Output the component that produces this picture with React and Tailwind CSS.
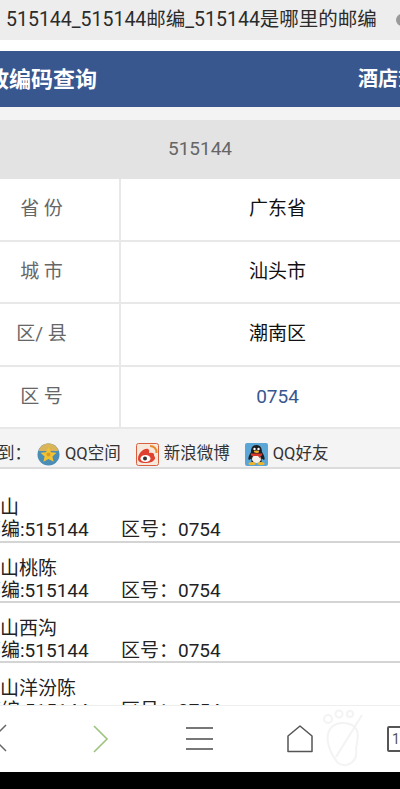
const font = { fontFamily: '"Roboto", "Noto Sans CJK SC", sans-serif' };

const rows = [
  { label: "省 份", value: "广东省" },
  { label: "城 市", value: "汕头市" },
  { label: "区/ 县", value: "潮南区" },
  { label: "区 号", value: "0754", link: true },
];

const places = ["山", "山桃陈", "山西沟", "山洋汾陈"];

/* ─── Share icons ─── */
function QzoneIcon() {
  return (
    <svg width="23" height="23" viewBox="0 0 23 23" className="shrink-0">
      <circle cx="11.5" cy="11.5" r="11" fill="#4b8db5" />
      <path d="M11.5 .5 C16 .5 20 3 21.5 8 L1.5 8 C3 3 7 .5 11.5 .5Z" fill="#d9b45a" />
      <path d="M11.5 4 L14 9.2 L19.5 9.8 L15.4 13.4 L16.6 18.8 L11.5 16 L6.4 18.8 L7.6 13.4 L3.5 9.8 L9 9.2Z" fill="#f3c230" />
      <circle cx="11.5" cy="11.5" r="2" fill="#d99a2a" />
    </svg>
  );
}

function WeiboIcon() {
  return (
    <svg width="23" height="23" viewBox="0 0 23 23" className="shrink-0">
      <rect x="0.5" y="0.5" width="22" height="22" rx="2" fill="#f6e9dc" stroke="#d9603f" />
      <path d="M2 16 C2 10 8 5 12 6 C14 7 13 9 13 10 C16 9 19 10 18 13 C20 14 20 19 11 20 C6 20.5 2 19 2 16Z" fill="#e0402f" />
      <ellipse cx="9.5" cy="15.5" rx="5" ry="3.6" fill="#fff" />
      <circle cx="9" cy="15.5" r="2" fill="#333" />
      <path d="M14 3 C18 3 21 6 20.5 10" fill="none" stroke="#e8892f" strokeWidth="2" />
    </svg>
  );
}

function QqIcon() {
  return (
    <svg width="23" height="23" viewBox="0 0 23 23" className="shrink-0">
      <rect width="23" height="23" rx="2" fill="#5aa6d6" />
      <path d="M11.5 2 C16 2 17 6 17 9 C19 12 20.5 16 19 17 L16.5 15.5 L16.5 19 L6.5 19 L6.5 15.5 L4 17 C2.500 16 4 12 6 9 C6 6 7 2 11.5 2Z" fill="#1d1d1f" />
      <ellipse cx="11.5" cy="16" rx="4.5" ry="4" fill="#f4f1ea" />
      <path d="M5.500 10.500 L17.500 10.500 L16.500 13 L15 13 L15.500 16 L13 13 L6.500 13Z" fill="#d8382b" />
      <circle cx="9.500" cy="6" r="1.200" fill="#fff" />
      <circle cx="13.500" cy="6" r="1.200" fill="#fff" />
      <ellipse cx="11.5" cy="8.700" rx="2.600" ry="1.200" fill="#f0b429" />
      <ellipse cx="7" cy="20.500" rx="3.500" ry="1.600" fill="#f0b429" />
      <ellipse cx="16" cy="20.500" rx="3.500" ry="1.600" fill="#f0b429" />
    </svg>
  );
}

function ShareItem({ icon, label, className }) {
  return (
    <div className={`flex shrink-0 items-center gap-[5px] ${className}`}>
      {icon}
      <span className="text-[16.5px] text-[#333]">{label}</span>
    </div>
  );
}

function App() {
  return (
    <div style={font} className="relative flex h-[789px] w-[400px] flex-col overflow-hidden bg-white">
      {/* Browser title */}
      <div className="flex h-10 shrink-0 items-center gap-[19px] overflow-hidden whitespace-nowrap bg-[#ededed] pl-[6px] text-[19.5px] text-[#2b2b2b]">
        <span>515144_515144邮编_515144是哪里的邮编</span>
        <span className="h-[12px] w-[12px] shrink-0 rounded-full bg-[#999]" />
      </div>

      {/* Site header */}
      <div className="mt-[11px] flex h-14 shrink-0 items-center overflow-hidden whitespace-nowrap bg-[#38578f] text-white">
        <span className="-ml-[35px] shrink-0 text-[22px] font-bold">邮政编码查询</span>
        <span className="ml-[261px] shrink-0 text-[20px] font-bold">酒店查询</span>
      </div>
      <div className="h-[13px] shrink-0 bg-[#f3f3f3]" />

      {/* Result table */}
      <div className="flex h-[59px] shrink-0 items-center justify-center bg-[#e3e3e3] text-[19px] text-[#666]">515144</div>
      {rows.map((row) => (
        <div key={row.label} className="flex h-[62.5px] shrink-0 items-center border-b-2 border-[#e8e8e8]">
          <div className="flex h-full w-[121px] shrink-0 items-center justify-center whitespace-nowrap border-r-2 border-[#e8e8e8] pr-[36px] text-[19px] text-[#666]">
            {row.label}
          </div>
          <div className={row.link ? "ml-[34px] flex-1 text-center text-[19px] text-[#38578f]" : "ml-[34px] flex-1 text-center text-[19px] text-[#111]"}>
            {row.value}
          </div>
        </div>
      ))}

      {/* Share bar */}
      <div className="flex h-[40px] shrink-0 items-center overflow-hidden whitespace-nowrap border-b-2 border-[#dcdcdc] bg-[#f4f4f4] pt-[13px] text-[16.5px] text-[#333]">
        <span className="-ml-[35px] w-[72px] shrink-0">分享到：</span>
        <ShareItem icon={<QzoneIcon />} label="QQ空间" />
        <ShareItem icon={<WeiboIcon />} label="新浪微博" className="ml-[15px]" />
        <ShareItem icon={<QqIcon />} label="QQ好友" className="ml-[15px]" />
      </div>

      {/* Post office list */}
      <div className="flex-1 overflow-hidden">
        {places.map((place, i) => (
          <div key={place} className={i === 0 ? "h-[74px] overflow-hidden whitespace-nowrap border-b-2 border-[#d4d4d4] pt-[28px] text-[19px] leading-[22px] text-[#222]" : "h-[60px] overflow-hidden whitespace-nowrap border-b-2 border-[#d4d4d4] pt-[15px] text-[19px] leading-[22px] text-[#222]"}>
            <div>{place}</div>
            <div className="-ml-[18px] flex">
              <span className="w-[139px]">邮编:515144</span>
              <span>区号：0754</span>
            </div>
          </div>
        ))}
      </div>

      {/* Browser toolbar */}
      <div className="relative flex h-[67px] shrink-0 items-center border-t border-[#eee] bg-white text-[#666]">
        <svg width="8" height="28" viewBox="0 0 8 28" className="absolute left-0 top-[18px]" fill="none" stroke="#666" strokeWidth="1.5">
          <path d="M6 1 L-7 14 L6 27" />
        </svg>
        <svg width="16" height="28" viewBox="0 0 16 28" className="absolute left-[93px] top-[19px]" fill="none" stroke="#9cc47c" strokeWidth="1.6">
          <path d="M1 1 L14 14 L1 27" />
        </svg>
        <div className="absolute left-[186px] top-[21px] flex h-[23px] w-[27px] flex-col justify-between">
          <div className="h-[2px] bg-[#777]" />
          <div className="h-[2px] bg-[#777]" />
          <div className="h-[2px] bg-[#777]" />
        </div>
        <svg width="26" height="28" viewBox="0 0 26 28" className="absolute left-[287px] top-[19px]" fill="none" stroke="#555" strokeWidth="1.5" strokeLinejoin="round">
          <path d="M13 1 L25 11 L25 26.5 L1 26.5 L1 11Z" />
        </svg>
        {/* Footprint watermark */}
        <svg width="44" height="60" viewBox="0 0 44 60" className="absolute left-[322px] top-[3px]" fill="none" stroke="#f3f3f3" strokeWidth="2">
          <circle cx="6" cy="10" r="4" />
          <circle cx="17" cy="5" r="3.5" />
          <circle cx="28" cy="5" r="3" />
          <path d="M8 20 C2 30 8 44 16 54 C26 60 36 52 34 40 C36 30 38 20 30 16 C22 12 12 14 8 20Z" />
          <path d="M40 6 L14 48" />
        </svg>
        <div className="absolute left-[387px] top-[20px] flex h-[26px] w-[30px] items-center rounded-[2px] border-2 border-[#555] pl-[3px] text-[14px] leading-none text-[#555]">1</div>
      </div>
      <div className="h-[17px] shrink-0 bg-black" />
    </div>
  );
}

export default App;
